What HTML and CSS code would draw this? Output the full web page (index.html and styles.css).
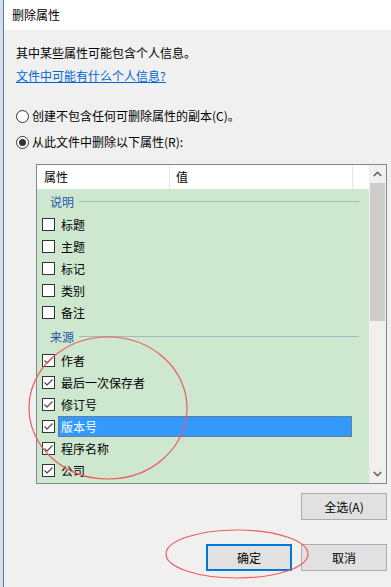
FILE: index.html
```html
<!DOCTYPE html>
<html lang="zh-CN">

<head>
    <meta charset="UTF-8">
    <meta name="viewport" content="width=device-width, initial-scale=1.0">
    <title>删除属性</title>
    <link rel="stylesheet" href="styles.css">
</head>

<body>
    <div class="frame-edge"></div>

    <div class="dialog">
        <div class="titlebar">删除属性</div>

        <div class="content">
            <p class="info">其中某些属性可能包含个人信息。</p>
            <a class="info-link" href="#">文件中可能有什么个人信息?</a>

            <label class="radio-row">
                <span class="radio"></span>
                <span>创建不包含任何可删除属性的副本(C)。</span>
            </label>
            <label class="radio-row">
                <span class="radio checked"></span>
                <span>从此文件中删除以下属性(R):</span>
            </label>

            <div class="prop-list">
                <div class="prop-main">
                    <div class="list-header">
                        <div class="col col-name">属性</div>
                        <div class="col col-value">值</div>
                        <div class="col col-rest"></div>
                    </div>
                    <div class="list-body">
                        <div class="group">
                            <span>说明</span>
                            <span class="group-line"></span>
                        </div>
                        <div class="row"><span class="check"></span><span class="row-text">标题</span></div>
                        <div class="row"><span class="check"></span><span class="row-text">主题</span></div>
                        <div class="row"><span class="check"></span><span class="row-text">标记</span></div>
                        <div class="row"><span class="check"></span><span class="row-text">类别</span></div>
                        <div class="row"><span class="check"></span><span class="row-text">备注</span></div>

                        <div class="group group-second">
                            <span>来源</span>
                            <span class="group-line"></span>
                        </div>
                        <div class="row"><span class="check"><svg width="11" height="11" viewBox="0 0 11 11"><path d="M1.5 5.5 L4 8 L9.5 2.5" fill="none" stroke="#555" stroke-width="1.3"/></svg></span><span class="row-text">作者</span></div>
                        <div class="row"><span class="check"><svg width="11" height="11" viewBox="0 0 11 11"><path d="M1.5 5.5 L4 8 L9.5 2.5" fill="none" stroke="#555" stroke-width="1.3"/></svg></span><span class="row-text">最后一次保存者</span></div>
                        <div class="row"><span class="check"><svg width="11" height="11" viewBox="0 0 11 11"><path d="M1.5 5.5 L4 8 L9.5 2.5" fill="none" stroke="#555" stroke-width="1.3"/></svg></span><span class="row-text">修订号</span></div>
                        <div class="row"><span class="check"><svg width="11" height="11" viewBox="0 0 11 11"><path d="M1.5 5.5 L4 8 L9.5 2.5" fill="none" stroke="#555" stroke-width="1.3"/></svg></span><span class="row-text selected">版本号</span></div>
                        <div class="row"><span class="check"><svg width="11" height="11" viewBox="0 0 11 11"><path d="M1.5 5.5 L4 8 L9.5 2.5" fill="none" stroke="#555" stroke-width="1.3"/></svg></span><span class="row-text">程序名称</span></div>
                        <div class="row"><span class="check"><svg width="11" height="11" viewBox="0 0 11 11"><path d="M1.5 5.5 L4 8 L9.5 2.5" fill="none" stroke="#555" stroke-width="1.3"/></svg></span><span class="row-text">公司</span></div>
                    </div>
                </div>

                <div class="scrollbar">
                    <div class="arrow">
                        <svg width="9" height="6" viewBox="0 0 9 6"><path d="M0.8 5 L4.5 1.3 L8.2 5" fill="none" stroke="#606060" stroke-width="1.6"/></svg>
                    </div>
                    <div class="thumb"></div>
                    <div class="track"></div>
                    <div class="arrow">
                        <svg width="9" height="6" viewBox="0 0 9 6"><path d="M0.8 1 L4.5 4.7 L8.2 1" fill="none" stroke="#606060" stroke-width="1.6"/></svg>
                    </div>
                </div>
            </div>

            <div class="button-row">
                <button class="btn">全选(A)</button>
            </div>
            <div class="button-row bottom-buttons">
                <button class="btn btn-default">确定</button>
                <button class="btn">取消</button>
            </div>
        </div>
    </div>

    <!-- 红色圈注 -->
    <svg class="marks" width="391" height="587" viewBox="0 0 391 587">
        <ellipse cx="108" cy="408" rx="79" ry="71" fill="none" stroke="#ee5a5f" stroke-width="1.2"/>
        <ellipse cx="237" cy="554" rx="71" ry="24" fill="none" stroke="#ee5a5f" stroke-width="1.2"/>
    </svg>
</body>

</html>
```

FILE: styles.css
```css
* {
    margin: 0;
    padding: 0;
    box-sizing: border-box;
}

body {
    font-family: "Noto Sans CJK SC", "Noto Sans", sans-serif;
    font-size: 12px;
    color: #000;
    background-color: #f0f0f0;
    width: 391px;
    height: 587px;
    overflow: hidden;
    display: flex;
    position: relative;
}

.frame-edge {
    width: 4px;
    background-color: #dcdcdc;
    border-right: 1px solid #3f82cc;
}

.dialog {
    flex: 1;
    display: flex;
    flex-direction: column;
}

.titlebar {
    height: 30px;
    line-height: 30px;
    padding-left: 8px;
    background-color: #ffffff;
}

.content {
    padding: 14px 4px 0 12px;
    display: flex;
    flex-direction: column;
}

.info {
    line-height: 18px;
}

.info-link {
    margin-top: 5px;
    line-height: 18px;
    color: #0066cc;
    text-decoration: underline;
    align-self: flex-start;
}

.radio-row {
    display: flex;
    align-items: center;
    gap: 3px;
    line-height: 18px;
    margin-top: 8px;
}

.radio-row:first-of-type {
    margin-top: 22px;
}

.radio {
    width: 13px;
    height: 13px;
    border: 1px solid #333;
    border-radius: 50%;
    background-color: #fff;
    display: flex;
    align-items: center;
    justify-content: center;
}

.radio.checked::after {
    content: "";
    width: 7px;
    height: 7px;
    border-radius: 50%;
    background-color: #333;
}

.prop-list {
    margin: 13px 0 0 20px;
    height: 320px;
    border: 1px solid #828790;
    display: flex;
}

.prop-main {
    flex: 1;
    display: flex;
    flex-direction: column;
}

.list-header {
    height: 24px;
    display: flex;
    background-color: #fff;
}

.col {
    line-height: 24px;
    border-right: 1px solid #e5e5e5;
}

.col-name {
    width: 133px;
    padding-left: 7px;
}

.col-value {
    width: 183px;
    padding-left: 6px;
}

.col-rest {
    flex: 1;
    border-right: none;
}

.list-body {
    flex: 1;
    background-color: #cde8cf;
}

.group {
    height: 24px;
    display: flex;
    align-items: center;
    padding-left: 13px;
    color: #2555a8;
}

.group-second {
    height: 26px;
    padding-top: 1px;
}

.group-line {
    flex: 1;
    height: 1px;
    margin: 0 10px 0 5px;
    background-color: #a3b9c4;
}

.row {
    height: 22px;
    display: flex;
    align-items: center;
    padding-left: 5px;
}

.check {
    width: 13px;
    height: 13px;
    border: 1px solid #333;
    background-color: #fff;
    margin-right: 3px;
    flex-shrink: 0;
    display: flex;
}

.row-text {
    padding-left: 2px;
    line-height: 19px;
    border: 1px solid transparent;
}

.row-text.selected {
    flex: 1;
    margin-right: 17px;
    background-color: #3399ff;
    color: #fff;
    border: 1px dotted #8b6a3e;
}

.scrollbar {
    width: 17px;
    display: flex;
    flex-direction: column;
    background-color: #f0f0f0;
}

.arrow {
    height: 18px;
    display: flex;
    align-items: center;
    justify-content: center;
}

.thumb {
    height: 138px;
    margin: 0 1px;
    background-color: #cdcdcd;
}

.track {
    flex: 1;
}

.button-row {
    display: flex;
    justify-content: flex-end;
    gap: 9px;
    margin-top: 9px;
}

.bottom-buttons {
    margin-top: 24px;
}

.btn {
    width: 86px;
    height: 27px;
    font-family: inherit;
    font-size: 12px;
    color: #000;
    background-color: #e1e1e1;
    border: 1px solid #adadad;
}

.btn-default {
    border: 2px solid #0078d7;
}

.marks {
    position: absolute;
    left: 0;
    top: 0;
    pointer-events: none;
}
```
